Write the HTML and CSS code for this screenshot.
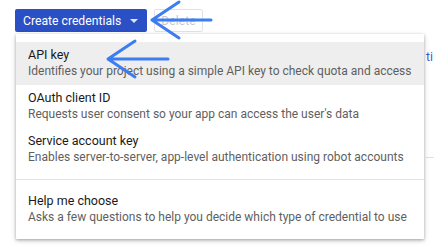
FILE: index.html
```html
<!DOCTYPE html>
<html lang="en">
<head>
    <meta charset="UTF-8">
    <meta name="viewport" content="width=device-width, initial-scale=1.0">
    <link rel="stylesheet" href="styles.css">
    <title>Credentials</title>
</head>
<body>
    <div class="page">
        <div class="toolbar">
            <button class="btn btn-primary">Create credentials <span class="caret"></span></button>
            <button class="btn btn-disabled" disabled>Delete</button>
        </div>

        <div class="content">
            <div class="content-row"><a class="link" href="#">ti</a></div>
        </div>

        <div class="menu">
            <div class="menu-item active">
                <div class="menu-title">API key</div>
                <div class="menu-desc">Identifies your project using a simple API key to check quota and access</div>
            </div>
            <div class="menu-item">
                <div class="menu-title">OAuth client ID</div>
                <div class="menu-desc">Requests user consent so your app can access the user's data</div>
            </div>
            <div class="menu-item">
                <div class="menu-title">Service account key</div>
                <div class="menu-desc">Enables server-to-server, app-level authentication using robot accounts</div>
            </div>
            <div class="menu-divider"></div>
            <div class="menu-item">
                <div class="menu-title">Help me choose</div>
                <div class="menu-desc">Asks a few questions to help you decide which type of credential to use</div>
            </div>
        </div>

        <!-- hand drawn annotation arrows -->
        <svg class="arrows" width="434" height="245" viewBox="0 0 434 245">
            <path d="M211 20 H152 M179 2 L152 20 L179 38" />
            <path d="M168 59 H108 M135 41 L108 59 L135 77" />
        </svg>
    </div>
</body>
</html>
```

FILE: styles.css
```css
body {
    margin: 0;
    background: #fff;
    font-family: Roboto, "Liberation Sans", Arial, sans-serif;
}

.page {
    position: relative;
    width: 434px;
    height: 245px;
    overflow: hidden;
}

.toolbar {
    display: flex;
    gap: 7px;
    padding: 9px 15px 0;
}

.btn {
    box-sizing: border-box;
    height: 23px;
    font-family: inherit;
    font-size: 12.2px;
    border-radius: 2px;
    display: flex;
    align-items: center;
    white-space: nowrap;
    padding: 0 8px;
}

.btn-primary {
    width: 132px;
    background: #2b4fc4;
    color: #fff;
    border: none;
    gap: 9px;
}

.caret {
    width: 0;
    height: 0;
    border-left: 4px solid transparent;
    border-right: 4px solid transparent;
    border-top: 4px solid #dfe6fa;
}

.btn-disabled {
    width: 49px;
    background: #fff;
    color: #c8c8c8;
    border: 1px solid #e2e2e2;
    justify-content: center;
}

.content {
    margin-top: 17px;
    padding-left: 426px;
    white-space: nowrap;
    font-size: 12px;
    line-height: 16px;
}

.content-row {
    height: 108px;
    border-bottom: 1px solid #e0e0e0;
}

.link {
    color: #2b5fd9;
    text-decoration: none;
}

.menu {
    position: absolute;
    top: 34px;
    left: 16px;
    width: 408px;
    padding: 8px 0;
    background: #fff;
    box-shadow: 0 1px 3px rgba(0, 0, 0, 0.3), 0 2px 6px rgba(0, 0, 0, 0.12);
}

.menu-item {
    padding: 4px 12px 6px;
    white-space: nowrap;
}

.menu-item.active {
    background: #eeeeee;
}

.menu-title {
    font-size: 12.5px;
    line-height: 17px;
    color: #1a1a1a;
}

.menu-desc {
    font-size: 12px;
    line-height: 16px;
    color: #5f5f5f;
}

.menu-divider {
    height: 1px;
    background: #e4e4e4;
    margin: 8px 0;
}

.arrows {
    position: absolute;
    top: 0;
    left: 0;
    pointer-events: none;
}

.arrows path {
    fill: none;
    stroke: #3d7cf2;
    stroke-width: 3;
    stroke-linecap: round;
    stroke-linejoin: round;
}
```
